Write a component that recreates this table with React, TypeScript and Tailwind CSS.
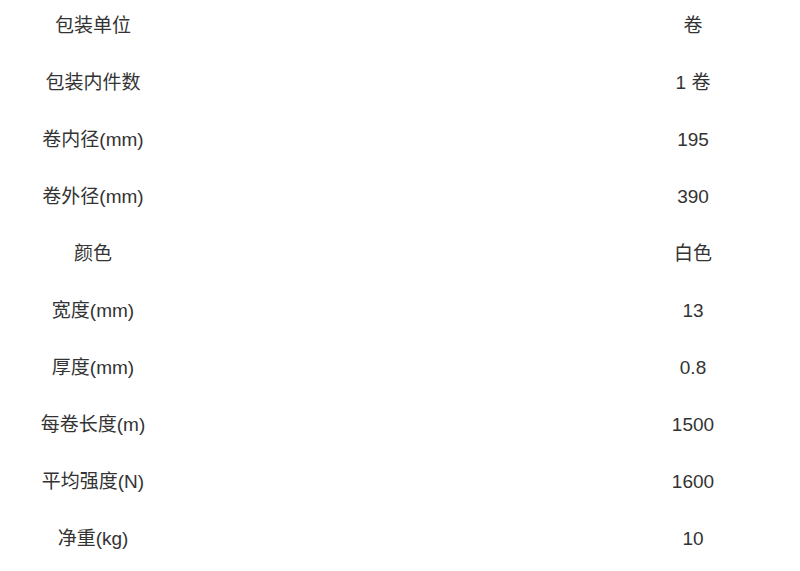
const rows: [string, string][] = [
  ["包装单位", "卷"],
  ["包装内件数", "1 卷"],
  ["卷内径(mm)", "195"],
  ["卷外径(mm)", "390"],
  ["颜色", "白色"],
  ["宽度(mm)", "13"],
  ["厚度(mm)", "0.8"],
  ["每卷长度(m)", "1500"],
  ["平均强度(N)", "1600"],
  ["净重(kg)", "10"],
];

export default function App() {
  return (
    <div
      className="w-[800px] h-[571px] overflow-hidden bg-white text-[#333] text-[19px]"
      style={{ fontFamily: '"Liberation Sans", "Noto Sans CJK SC", sans-serif' }}
    >
      <div className="-mt-[2px] flex flex-col">
        {rows.map(([label, value]) => (
          <div key={label} className="flex h-[57px] items-center">
            <div className="w-[186px] text-center">{label}</div>
            <div className="flex-1" />
            <div className="w-[214px] text-center">{value}</div>
          </div>
        ))}
      </div>
    </div>
  );
}
